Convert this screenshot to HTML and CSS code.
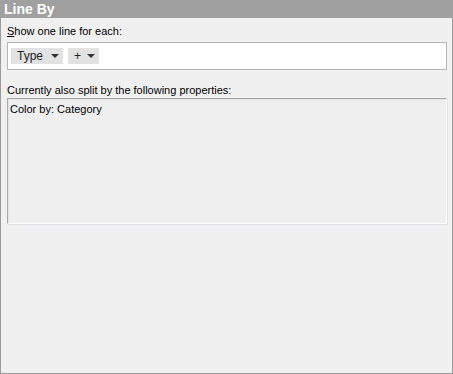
FILE: index.html
```html
<!DOCTYPE html>
<html lang="en">
<head>
    <meta charset="UTF-8">
    <title>Line By</title>
    <link rel="stylesheet" href="styles.css">
</head>
<body>
    <div class="panel">
        <div class="panel-header">Line By</div>
        <div class="panel-body">
            <div class="label"><u>S</u>how one line for each:</div>
            <div class="axis-box">
                <span class="chip chip-type">Type <span class="arrow"></span></span>
                <span class="chip chip-plus">+ <span class="arrow"></span></span>
            </div>
            <div class="label label-split">Currently also split by the following properties:</div>
            <div class="split-box">Color by: Category</div>
        </div>
    </div>
</body>
</html>
```

FILE: styles.css
```css
body {
    margin: 0;
    font-family: "Liberation Sans", Arial, sans-serif;
    font-size: 11px;
    color: #000;
}
.panel {
    width: 453px;
    height: 374px;
    box-sizing: border-box;
    background-color: #f0f0f0;
    border: 1px solid #9b9b9b;
    border-top: none;
}
.panel-header {
    height: 18px;
    margin: 0 -1px;
    padding-left: 4px;
    background-color: #a0a0a0;
    color: #fff;
    font-weight: bold;
    font-size: 14px;
    line-height: 19px;
}
.panel-body {
    padding: 7px 5px 0 6px;
}
.label {
    height: 13px;
    line-height: 13px;
    margin-bottom: 4px;
}
.axis-box {
    height: 28px;
    box-sizing: border-box;
    background-color: #fff;
    border: 1px solid #b4b4b4;
    display: flex;
    align-items: center;
    gap: 5px;
    padding-left: 3px;
}
.chip {
    display: flex;
    align-items: center;
    height: 16px;
    background-color: #e2e2e2;
    color: #222;
    font-size: 12px;
    padding-left: 6px;
    box-sizing: border-box;
}
.chip-type {
    width: 52px;
}
.chip-plus {
    width: 31px;
}
.arrow {
    margin-left: auto;
    margin-right: 4px;
    width: 0;
    height: 0;
    border-left: 4px solid transparent;
    border-right: 4px solid transparent;
    border-top: 4px solid #333;
}
.label-split {
    margin-top: 14px;
    margin-bottom: 1px;
}
.split-box {
    height: 126px;
    box-sizing: border-box;
    background-color: #efefef;
    border: 1px solid #fff;
    border-top-color: #a8a8a8;
    border-left-color: #a8a8a8;
    box-shadow: inset 1px 1px 0 #e3e3e3, 1px 1px 0 #dfe0e8;
    padding: 4px 2px;
    line-height: 13px;
}
```
